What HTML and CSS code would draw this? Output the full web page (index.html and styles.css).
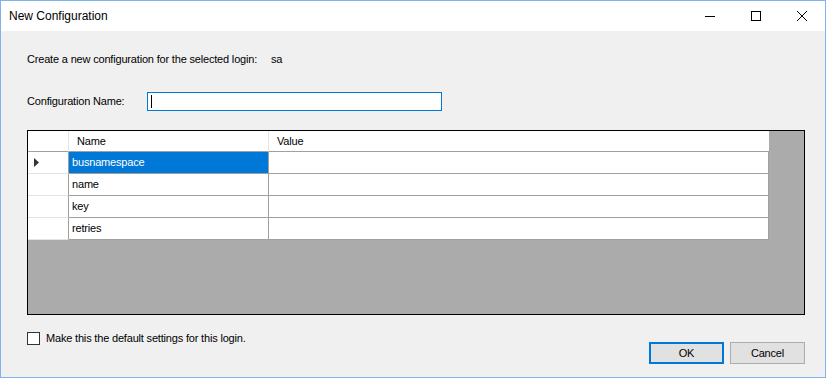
FILE: index.html
```html
<!DOCTYPE html>
<html>
<head>
<meta charset="utf-8">
<link rel="stylesheet" href="styles.css">
</head>
<body>
<div class="window">
  <div class="titlebar">
    <span class="title">New Configuration</span>
    <div class="controls">
      <span class="ctl"><svg width="10" height="10" viewBox="0 0 10 10"><line x1="0" y1="5.5" x2="10" y2="5.5" stroke="#000" stroke-width="1"/></svg></span>
      <span class="ctl"><svg width="10" height="10" viewBox="0 0 10 10"><rect x="0.5" y="0.5" width="9" height="9" fill="none" stroke="#000" stroke-width="1"/></svg></span>
      <span class="ctl"><svg width="10" height="10" viewBox="0 0 10 10"><path d="M0 0 L10 10 M10 0 L0 10" stroke="#000" stroke-width="1"/></svg></span>
    </div>
  </div>
  <div class="content">
    <p class="intro"><span class="intro-label">Create a new configuration for the selected login:</span><span>sa</span></p>
    <div class="name-row">
      <span class="name-label">Configuration Name:</span>
      <div class="input"><span class="caret"></span></div>
    </div>
    <div class="grid">
      <div class="table">
        <div class="row head"><div class="rh"></div><div class="c name">Name</div><div class="c value">Value</div></div>
        <div class="row"><div class="rh"><svg width="5" height="9" viewBox="0 0 5 9"><polygon points="0,0 5,4.5 0,9" fill="#333"/></svg></div><div class="c name sel">busnamespace</div><div class="c value"></div></div>
        <div class="row"><div class="rh"></div><div class="c name">name</div><div class="c value"></div></div>
        <div class="row"><div class="rh"></div><div class="c name">key</div><div class="c value"></div></div>
        <div class="row"><div class="rh"></div><div class="c name">retries</div><div class="c value"></div></div>
      </div>
    </div>
    <div class="footer">
      <label class="check"><span class="box"></span>Make this the default settings for this login.</label>
      <div class="buttons">
        <button class="btn ok">OK</button>
        <button class="btn">Cancel</button>
      </div>
    </div>
  </div>
</div>
</body>
</html>
```
FILE: styles.css
```css
html, body {
  margin: 0;
  padding: 0;
  background: #f0f0f0;
}
.window {
  box-sizing: border-box;
  width: 826px;
  height: 378px;
  border: 1px solid #7eb4ea;
  background: #f0f0f0;
  display: flex;
  flex-direction: column;
  font-family: "Liberation Sans", Arial, sans-serif;
  font-size: 11px;
  letter-spacing: -0.18px;
  color: #000;
}
.titlebar {
  height: 30px;
  background: #fff;
  display: flex;
  align-items: center;
  justify-content: space-between;
}
.title {
  padding-left: 8px;
  font-size: 12px;
  letter-spacing: 0;
  padding-bottom: 1px;
}
.controls {
  display: flex;
  height: 30px;
}
.ctl {
  width: 46px;
  height: 30px;
  display: flex;
  align-items: center;
  justify-content: center;
}
.ctl svg { display: block; }
.content {
  flex: 1;
  padding: 0 20px 0 26px;
  display: flex;
  flex-direction: column;
}
.intro {
  margin: 22px 0 0 0;
  line-height: 13px;
  height: 13px;
}
.intro-label {
  display: inline-block;
  width: 244px;
}
.name-row {
  margin-top: 26px;
  display: flex;
  align-items: center;
  height: 19px;
}
.name-label {
  width: 120px;
  line-height: 13px;
}
.input {
  box-sizing: border-box;
  width: 295px;
  height: 19px;
  border: 1px solid #0078d7;
  background: #fff;
  display: flex;
  align-items: center;
  padding-left: 3px;
}
.caret {
  width: 1px;
  height: 13px;
  background: #000;
}
.grid {
  margin-top: 19px;
  box-sizing: border-box;
  height: 185px;
  border: 1px solid #000;
  background: #ababab;
}
.table {
  width: 741px;
  display: flex;
  flex-direction: column;
}
.row {
  display: flex;
  height: 22px;
}
.row.head {
  height: 21px;
}
.rh, .c {
  box-sizing: border-box;
  background: #fff;
  border-right: 1px solid #a0a0a0;
  border-bottom: 1px solid #a0a0a0;
  display: flex;
  align-items: center;
  line-height: 13px;
  white-space: nowrap;
}
.rh {
  width: 41px;
  padding-left: 6px;
  border-bottom-color: #e3e3e3;
}
.c.name { width: 200px; padding-left: 3px; }
.c.value { width: 500px; padding-left: 3px; }
.head .rh, .head .c {
  border-right-color: #e3e3e3;
  border-bottom-color: #a0a0a0;
}
.head .c { padding-left: 8px; }
.head .c.value { border-right: none; width: 500px; }
.sel {
  background: #0078d7;
  color: #fff;
}
.footer {
  margin-top: 17px;
  display: flex;
  justify-content: space-between;
  align-items: flex-start;
}
.check {
  display: flex;
  align-items: center;
  line-height: 13px;
  gap: 6px;
}
.box {
  box-sizing: border-box;
  width: 13px;
  height: 13px;
  border: 1px solid #333;
  background: #fff;
}
.buttons {
  display: flex;
  gap: 6px;
  margin-top: 10px;
}
.btn {
  box-sizing: border-box;
  width: 75px;
  height: 22px;
  margin: 0;
  padding: 0;
  background: #e1e1e1;
  border: 1px solid #adadad;
  font-family: "Liberation Sans", Arial, sans-serif;
  font-size: 11px;
  letter-spacing: -0.18px;
  color: #000;
}
.btn.ok {
  border: 2px solid #0078d7;
}
```
